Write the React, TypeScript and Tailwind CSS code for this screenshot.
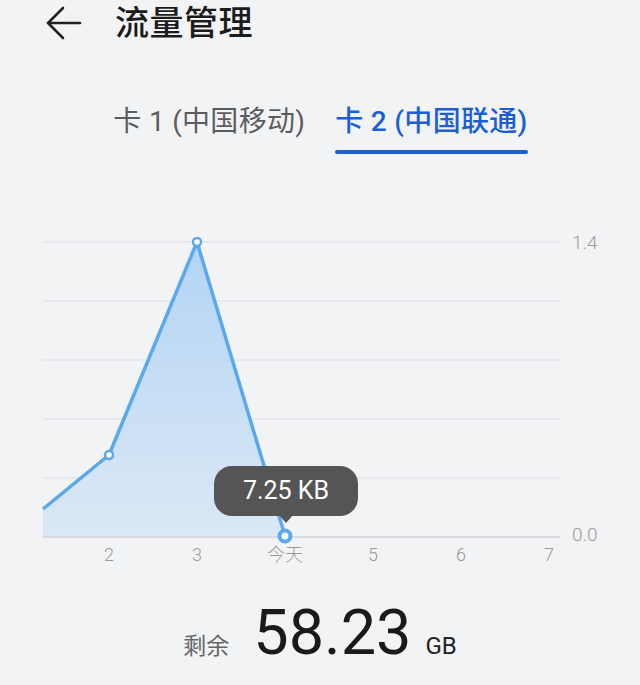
const BLUE_LINE = '#5aa9ee';

const xLabels = [
  { x: 109, t: '2' },
  { x: 197, t: '3' },
  { x: 285, t: '今天' },
  { x: 373, t: '5' },
  { x: 461, t: '6' },
  { x: 549, t: '7' },
];

const gridY = [241, 300, 359, 418, 477];

function UsageChart() {
  return (
    <div className="relative h-[350px] w-[640px]">
      <svg width="640" height="350" viewBox="0 220 640 350" className="block">
        <defs>
          <linearGradient id="area" x1="0" y1="241" x2="0" y2="536" gradientUnits="userSpaceOnUse">
            <stop offset="0" stopColor="#b3d4f5" />
            <stop offset="1" stopColor="#dbe8f5" />
          </linearGradient>
        </defs>
        {gridY.map((y) => (
          <line key={y} x1="43" x2="560" y1={y} y2={y} stroke="#e3e5e8" strokeWidth="1.5" />
        ))}
        <path d="M43,508 L109,454 L197,241 L285,535 L285,536 L43,536 Z" fill="url(#area)" />
        <line x1="43" x2="560" y1="536" y2="536" stroke="#d9dbde" strokeWidth="2" />
        <path
          d="M43,508 L109,454 L197,241 L285,535"
          fill="none"
          stroke={BLUE_LINE}
          strokeWidth="3.5"
          strokeLinejoin="round"
        />
        <circle cx="109" cy="454" r="4" fill="#fff" stroke={BLUE_LINE} strokeWidth="2.5" />
        <circle cx="197" cy="241" r="4" fill="#fff" stroke={BLUE_LINE} strokeWidth="2.5" />
        <circle cx="285" cy="535" r="5.5" fill="#fff" stroke={BLUE_LINE} strokeWidth="4" />
        {xLabels.map((l) => (
          <text
            key={l.t}
            x={l.x}
            y="555"
            textAnchor="middle"
            dominantBaseline="middle"
            fill="#9b9b9b"
            fontSize="18"
            fontWeight="300"
            fontFamily="Roboto, 'Noto Sans CJK SC', sans-serif"
          >
            {l.t}
          </text>
        ))}
        <text x="572" y="243" dominantBaseline="middle" fill="#9b9b9b" fontSize="19" fontWeight="300" fontFamily="Roboto, sans-serif">
          1.4
        </text>
        <text x="572" y="535" dominantBaseline="middle" fill="#9b9b9b" fontSize="19" fontWeight="300" fontFamily="Roboto, sans-serif">
          0.0
        </text>
      </svg>

      {/* 提示框 */}
      <div className="absolute left-[214px] top-[245px] flex h-[50px] w-[144px] items-center justify-center rounded-[18px] bg-[#555555]">
        <span className="text-[25px] font-normal text-white">7.25 KB</span>
        <div className="absolute left-[64px] top-[48px] h-0 w-0 border-x-[8px] border-t-[9px] border-x-transparent border-t-[#555555]" />
      </div>
    </div>
  );
}

export default function App() {
  return (
    <div className="h-[685px] w-[640px] overflow-hidden bg-[#f2f3f5] font-['Roboto','Noto_Sans_CJK_SC',sans-serif]">
      <div className="flex h-[46px] items-center pl-[46px]">
        <svg width="36" height="34" viewBox="0 0 36 34" fill="none" stroke="#222" strokeWidth="2.6" strokeLinecap="round" strokeLinejoin="round">
          <path d="M34 17 H3" />
          <path d="M17 2 L2 17 L17 32" />
        </svg>
        <h1 className="ml-[33px] text-[34px] font-medium leading-none tracking-[0.5px] text-[#1c1c1c]">流量管理</h1>
      </div>

      <div className="mt-[60px] flex justify-center gap-[30px] pl-[1px]">
        <div className="flex flex-col items-center">
          <span className="text-[28px] leading-[32px] tracking-[0.3px] text-[#5c5c5c]">卡 1 (中国移动)</span>
        </div>
        <div className="flex flex-col items-center">
          <span className="text-[28px] font-medium leading-[32px] tracking-[0.3px] text-[#1a5fd3]">卡 2 (中国联通)</span>
          <div className="mt-[12px] h-[4px] w-full rounded-full bg-[#1a5fd3]" />
        </div>
      </div>

      <div className="mt-[67px]">
        <UsageChart />
      </div>

      <div className="mt-[30px] flex items-baseline justify-center">
        <span className="text-[23px] text-[#666]">剩余</span>
        <span className="ml-[24px] text-[63px] leading-none text-[#1a1a1a]">58.23</span>
        <span className="ml-[14px] text-[24px] text-[#222]">GB</span>
      </div>
    </div>
  );
}
